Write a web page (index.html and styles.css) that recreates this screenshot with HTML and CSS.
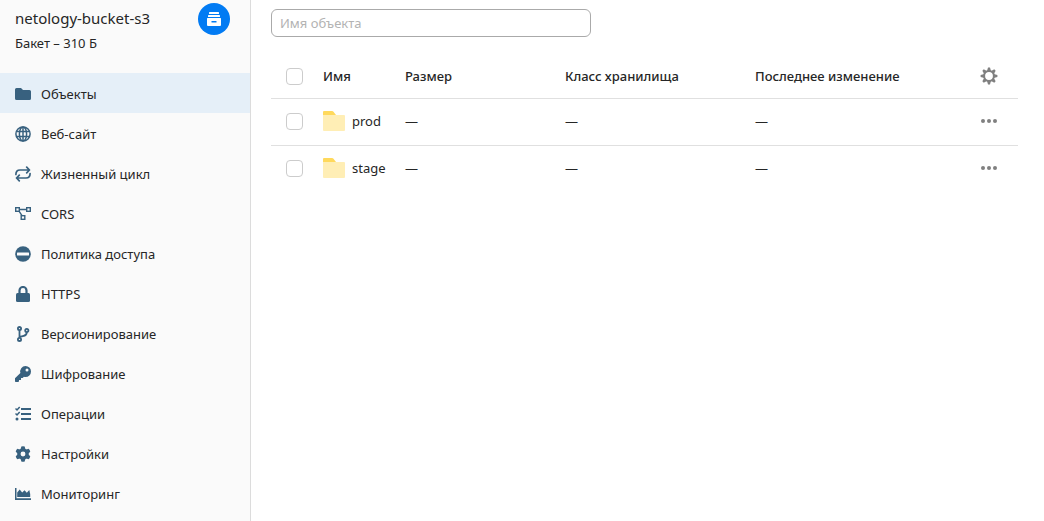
FILE: index.html
```html
<!DOCTYPE html>
<html lang="ru">
<head>
<meta charset="utf-8">
<meta name="viewport" content="width=device-width, initial-scale=1">
<title>netology-bucket-s3</title>
<link rel="stylesheet" href="styles.css">
</head>
<body>
<div class="app">
  <aside class="sidebar">
    <header class="bucket">
      <div class="bucket-info">
        <h1 class="bucket-name">netology-bucket-s3</h1>
        <p class="bucket-meta">Бакет – 310 Б</p>
      </div>
      <div class="bucket-badge">
        <svg width="16" height="16" viewBox="0 0 16 16" fill="currentColor" aria-hidden="true"><rect x="3" y="1" width="10" height="2" rx=".6"/><rect x="2" y="4" width="12" height="2" rx=".6"/><path fill-rule="evenodd" d="M1 7.6Q1 7 1.6 7h12.8q.6 0 .6.6V14q0 1-1 1H2q-1 0-1-1zM5.500 10v1.600h5V10z"/></svg>
      </div>
    </header>
    <nav class="menu" aria-label="Разделы бакета">
      <a class="menu-item is-active" href="#objects" aria-current="page">
        <svg class="icon" viewBox="0 0 16 16" fill="currentColor" aria-hidden="true"><path d="M0 3.5Q0 2 1.5 2H6l2 2h6.500q1.500 0 1.500 1.500v7q0 1.500-1.500 1.500h-13Q0 14 0 12.500z"/></svg>
        Объекты
      </a>
      <a class="menu-item" href="#website">
        <svg class="icon" viewBox="0 0 16 16" fill="none" stroke="currentColor" stroke-width="1.500" aria-hidden="true"><circle cx="8" cy="8" r="7.100"/><ellipse cx="8" cy="8" rx="3.600" ry="7.100"/><path d="M1.500 5.500h13M1.500 10.500h13M8 1v14"/></svg>
        Веб-сайт
      </a>
      <a class="menu-item" href="#lifecycle">
        <svg class="icon" viewBox="0 0 16 16" fill="none" stroke="currentColor" stroke-width="1.700" stroke-linecap="round" stroke-linejoin="round" aria-hidden="true"><path d="M.9 8.500Q.9 4 5 4h9M11.700 1.200 14.500 4l-2.800 2.800M15.100 7.500Q15.100 12 11 12H2M4.300 9.200 1.500 12l2.800 2.800"/></svg>
        Жизненный цикл
      </a>
      <a class="menu-item" href="#cors">
        <svg class="icon" viewBox="0 0 16 16" fill="none" stroke="currentColor" stroke-width="1.400" aria-hidden="true"><rect x=".7" y="1.700" width="3.600" height="3.600"/><rect x="11.700" y="1.700" width="3.600" height="3.600"/><rect x="6.200" y="9.700" width="3.600" height="3.600"/><path d="M4.500 3.500h7M4 5.200l3 4.500"/></svg>
        CORS
      </a>
      <a class="menu-item" href="#policy">
        <svg class="icon" viewBox="0 0 16 16" aria-hidden="true"><circle cx="8" cy="8" r="7.800" fill="currentColor"/><rect x="2" y="6.500" width="12" height="3" rx=".5" fill="#fafafa"/></svg>
        Политика доступа
      </a>
      <a class="menu-item" href="#https">
        <svg class="icon" viewBox="0 0 16 16" aria-hidden="true"><rect x="1" y="7" width="14" height="9" rx="1.500" fill="currentColor"/><path d="M4.500 8V4.500a3.500 3.500 0 0 1 7 0V8" fill="none" stroke="currentColor" stroke-width="2.200"/></svg>
        HTTPS
      </a>
      <a class="menu-item" href="#versioning">
        <svg class="icon" viewBox="0 0 16 16" fill="none" stroke="currentColor" stroke-width="1.800" aria-hidden="true"><circle cx="4.500" cy="2.600" r="1.600"/><circle cx="4.500" cy="13.400" r="1.600"/><circle cx="11.800" cy="4.500" r="1.600"/><path d="M4.500 4.200v7.600M11.800 6.200c0 3.800-2.800 3.200-7.300 5"/></svg>
        Версионирование
      </a>
      <a class="menu-item" href="#encryption">
        <svg class="icon" viewBox="0 0 16 16" fill="currentColor" aria-hidden="true"><path fill-rule="evenodd" d="M10.500 0a5.500 5.500 0 0 1 0 11q-.8 0-1.600-.3L7.700 12H6v2H4v1.300l-.7.700H.7Q0 16 0 15.300v-3L5.400 7A5.500 5.500 0 0 1 10.500 0m1.500 2.500a1.500 1.500 0 1 0 0 3 1.500 1.500 0 0 0 0-3"/></svg>
        Шифрование
      </a>
      <a class="menu-item" href="#operations">
        <svg class="icon" viewBox="0 0 16 16" aria-hidden="true"><path d="M6 3h10M6 8h10M6 13h10" stroke="currentColor" stroke-width="2"/><path d="m.5 2.500 1.500 1.500 2.700-3M.5 7.500 2 9l2.700-3" fill="none" stroke="currentColor" stroke-width="1.500"/><circle cx="2" cy="13" r="1.500" fill="currentColor"/></svg>
        Операции
      </a>
      <a class="menu-item" href="#settings">
        <svg class="icon" viewBox="0 0 16 16" aria-hidden="true"><circle cx="8" cy="8" r="4.100" fill="none" stroke="currentColor" stroke-width="3.300"/><g fill="currentColor"><path id="tooth" d="M5.600 3.500 6.300.6Q8-.1 9.700.6l.7 2.900z"/><use href="#tooth" transform="rotate(60 8 8)"/><use href="#tooth" transform="rotate(120 8 8)"/><use href="#tooth" transform="rotate(180 8 8)"/><use href="#tooth" transform="rotate(240 8 8)"/><use href="#tooth" transform="rotate(300 8 8)"/></g></svg>
        Настройки
      </a>
      <a class="menu-item" href="#monitoring">
        <svg class="icon" viewBox="0 0 16 16" fill="currentColor" aria-hidden="true"><path d="M0 2h1.500v10.200H16V14H0zM2.200 11V6.500L4.700 3.500l2.500 3L9.500 4.200l2.300 2.600L14.300 4 15.200 8v3z"/></svg>
        Мониторинг
      </a>
    </nav>
  </aside>

  <main class="content">
    <input class="search" type="text" placeholder="Имя объекта" aria-label="Имя объекта">
    <table class="objects">
      <thead>
        <tr>
          <th class="col-check"><input class="check" type="checkbox" aria-label="Выбрать все"></th>
          <th class="col-name">Имя</th>
          <th class="col-size">Размер</th>
          <th class="col-class">Класс хранилища</th>
          <th class="col-date">Последнее изменение</th>
          <th class="col-actions">
            <button class="icon-button" type="button" aria-label="Настройки таблицы">
              <svg width="18" height="18" viewBox="0 0 18 18" aria-hidden="true"><circle cx="9" cy="9" r="4.900" fill="none" stroke="currentColor" stroke-width="2"/><g fill="currentColor"><path id="spike" d="M6.900 4.400 8 .6h2l1.100 3.800z"/><use href="#spike" transform="rotate(45 9 9)"/><use href="#spike" transform="rotate(90 9 9)"/><use href="#spike" transform="rotate(135 9 9)"/><use href="#spike" transform="rotate(180 9 9)"/><use href="#spike" transform="rotate(225 9 9)"/><use href="#spike" transform="rotate(270 9 9)"/><use href="#spike" transform="rotate(315 9 9)"/></g></svg>
            </button>
          </th>
        </tr>
      </thead>
      <tbody>
        <tr>
          <td class="col-check"><input class="check" type="checkbox" aria-label="Выбрать prod"></td>
          <td><a class="object-link" href="#prod"><svg width="22" height="20" viewBox="0 0 22 20" aria-hidden="true"><path d="M0 6V1q0-1 1-1h8q1 0 1.500.8L13 4v2z" fill="#ffd95c"/><path d="M0 4h21q1 0 1 1v14q0 1-1 1H1q-1 0-1-1z" fill="#ffeeb5"/></svg>prod</a></td>
          <td>—</td>
          <td>—</td>
          <td>—</td>
          <td class="col-actions"><button class="icon-button" type="button" aria-label="Действия с prod"><svg width="18" height="18" viewBox="0 0 18 18" fill="currentColor" aria-hidden="true"><circle cx="3" cy="9" r="2"/><circle cx="9" cy="9" r="2"/><circle cx="15" cy="9" r="2"/></svg></button></td>
        </tr>
        <tr>
          <td class="col-check"><input class="check" type="checkbox" aria-label="Выбрать stage"></td>
          <td><a class="object-link" href="#stage"><svg width="22" height="20" viewBox="0 0 22 20" aria-hidden="true"><path d="M0 6V1q0-1 1-1h8q1 0 1.500.8L13 4v2z" fill="#ffd95c"/><path d="M0 4h21q1 0 1 1v14q0 1-1 1H1q-1 0-1-1z" fill="#ffeeb5"/></svg>stage</a></td>
          <td>—</td>
          <td>—</td>
          <td>—</td>
          <td class="col-actions"><button class="icon-button" type="button" aria-label="Действия с stage"><svg width="18" height="18" viewBox="0 0 18 18" fill="currentColor" aria-hidden="true"><circle cx="3" cy="9" r="2"/><circle cx="9" cy="9" r="2"/><circle cx="15" cy="9" r="2"/></svg></button></td>
        </tr>
      </tbody>
    </table>
  </main>
</div>
</body>
</html>
```

FILE: styles.css
```css
* {
  box-sizing: border-box;
}

body {
  margin: 0;
  background: #fff;
  color: #262626;
  font: 13px/18px "Noto Sans", sans-serif;
}

.app {
  display: flex;
  min-height: 100vh;
}

.sidebar {
  flex: 0 0 251px;
  background: #fafafa;
  border-right: 1px solid #dcdcdc;
}

.bucket {
  display: flex;
  justify-content: space-between;
  padding: 3px 20px 20px 15px;
}

.bucket-name {
  margin: 5px 0 6px;
  font-size: 15px;
  line-height: 20px;
  font-weight: 400;
}

.bucket-meta {
  margin: 0;
  padding-bottom: 1px;
}

.bucket-badge {
  display: grid;
  place-items: center;
  width: 32px;
  height: 32px;
  border-radius: 50%;
  background: #027bf3;
  color: #fff;
}

.menu-item {
  display: flex;
  align-items: center;
  gap: 10px;
  height: 40px;
  padding: 2px 15px 0;
  color: inherit;
  text-decoration: none;
}

.menu-item.is-active {
  background: #e5eff8;
}

.icon {
  flex: none;
  width: 16px;
  height: 16px;
  color: #38617f;
}

.content {
  flex: 1;
  min-width: 0;
  padding: 9px 26px 20px 20px;
}

.search {
  display: block;
  width: 320px;
  max-width: 100%;
  height: 28px;
  padding: 0 8px;
  border: 1px solid #aaa;
  border-radius: 6px;
  background: #fff;
  color: inherit;
  font: inherit;
}

.search::placeholder {
  color: #b3b3b3;
  opacity: 1;
}

.objects {
  width: 100%;
  margin-top: 18px;
  border-collapse: collapse;
  table-layout: fixed;
}

.objects th,
.objects td {
  height: 47px;
  padding: 0;
  text-align: left;
  vertical-align: middle;
  white-space: nowrap;
}

.objects td {
  padding-bottom: 1px;
}

.objects th {
  height: 43px;
  font-weight: 500;
}

.objects tr:not(:last-child),
.objects thead tr:last-child {
  border-bottom: 1px solid #e0e0e0;
}

.objects .col-check {
  width: 52px;
  padding-left: 15px;
}

.col-name {
  width: 82px;
}

.col-size {
  width: 160px;
}

.col-class {
  width: 190px;
}

.objects .col-actions {
  width: 58px;
  text-align: center;
}

.check {
  display: block;
  appearance: none;
  width: 17px;
  height: 17px;
  margin: 0;
  border: 1px solid #ccc;
  border-radius: 4px;
  background: #fff;
}

.check:checked {
  border-color: #027bf3;
  background: #027bf3;
}

.object-link {
  display: flex;
  align-items: center;
  gap: 7px;
  color: inherit;
  text-decoration: none;
}

.icon-button {
  display: inline-grid;
  place-items: center;
  padding: 4px;
  border: 0;
  background: none;
  color: #808080;
  vertical-align: middle;
  cursor: pointer;
}
```
